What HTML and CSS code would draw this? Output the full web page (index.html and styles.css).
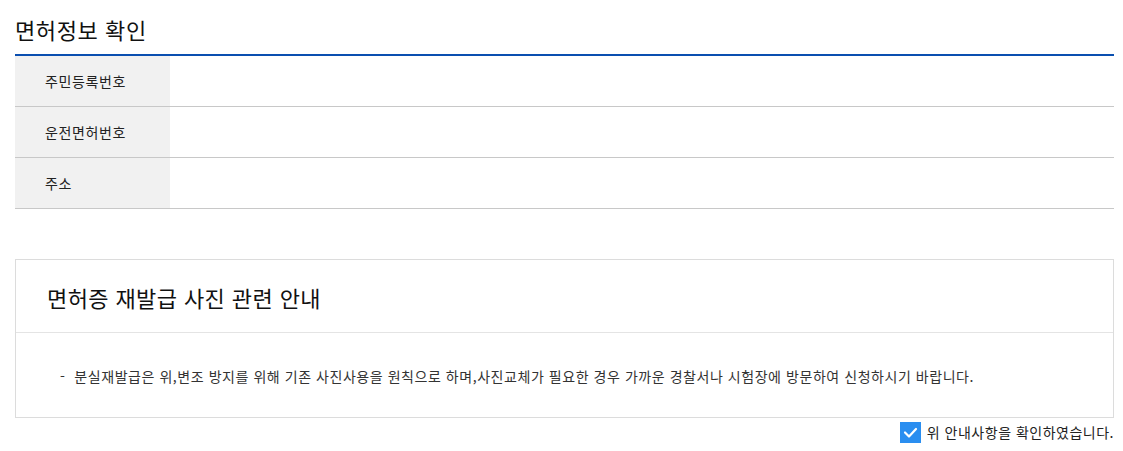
FILE: index.html
```html
<!DOCTYPE html>
<html lang="ko">
<head>
<meta charset="utf-8">
<link rel="stylesheet" href="styles.css">
</head>
<body>
<div class="page">
  <h2 class="title">면허정보 확인</h2>
  <div class="info-table">
    <div class="row"><div class="label">주민등록번호</div><div class="value"></div></div>
    <div class="row"><div class="label">운전면허번호</div><div class="value"></div></div>
    <div class="row"><div class="label">주소</div><div class="value"></div></div>
  </div>
  <div class="notice">
    <div class="notice-head">면허증 재발급 사진 관련 안내</div>
    <div class="notice-body">-&nbsp; 분실재발급은 위,변조 방지를 위해 기존 사진사용을 원칙으로 하며,사진교체가 필요한 경우 가까운 경찰서나 시험장에 방문하여 신청하시기 바랍니다.</div>
  </div>
  <label class="agree">
    <span class="check"><svg width="21" height="21" viewBox="0 0 21 21"><path d="M5 10.5 L9 14.5 L16 7" fill="none" stroke="#fff" stroke-width="2.2" stroke-linecap="round" stroke-linejoin="round"/></svg></span>
    <span class="agree-text">위 안내사항을 확인하였습니다.</span>
  </label>
</div>
</body>
</html>
```

FILE: styles.css
```css
* { box-sizing: border-box; }
html, body { margin: 0; padding: 0; background: #fff; }
body {
  font-family: "Noto Sans CJK KR", "Noto Sans", sans-serif;
  color: #222;
}
.page {
  padding: 0 9px 0 15px;
}
.title {
  margin: 0;
  padding-top: 14px;
  height: 54px;
  font-size: 22px;
  font-weight: 400;
  line-height: 30px;
  letter-spacing: 0.6px;
  color: #111;
}
.info-table {
  border-top: 2px solid #0a4fb0;
}
.row {
  display: flex;
  height: 51px;
  border-bottom: 1px solid #c8c8c8;
}
.label {
  width: 155px;
  background: #f1f1f1;
  padding-left: 30px;
  font-size: 14px;
  line-height: 50px;
  letter-spacing: 0.6px;
  color: #222;
}
.value { flex: 1; }
.notice {
  margin-top: 50px;
  border: 1px solid #dcdcdc;
}
.notice-head {
  height: 73px;
  border-bottom: 1px solid #e4e4e4;
  padding-left: 31px;
  font-size: 22px;
  line-height: 74px;
  letter-spacing: 0.4px;
  color: #111;
}
.notice-body {
  height: 84px;
  padding-left: 44px;
  padding-top: 31px;
  font-size: 14px;
  line-height: 24px;
  letter-spacing: 0.55px;
  color: #333;
}
.agree {
  display: flex;
  justify-content: flex-end;
  align-items: center;
  gap: 6px;
  margin-top: 4px;
}
.check {
  width: 21px;
  height: 21px;
  background: #2a8ef0;
  display: block;
}
.check svg { display: block; }
.agree-text {
  font-size: 14px;
  color: #222;
  line-height: 21px;
  letter-spacing: 0.5px;
}
```
